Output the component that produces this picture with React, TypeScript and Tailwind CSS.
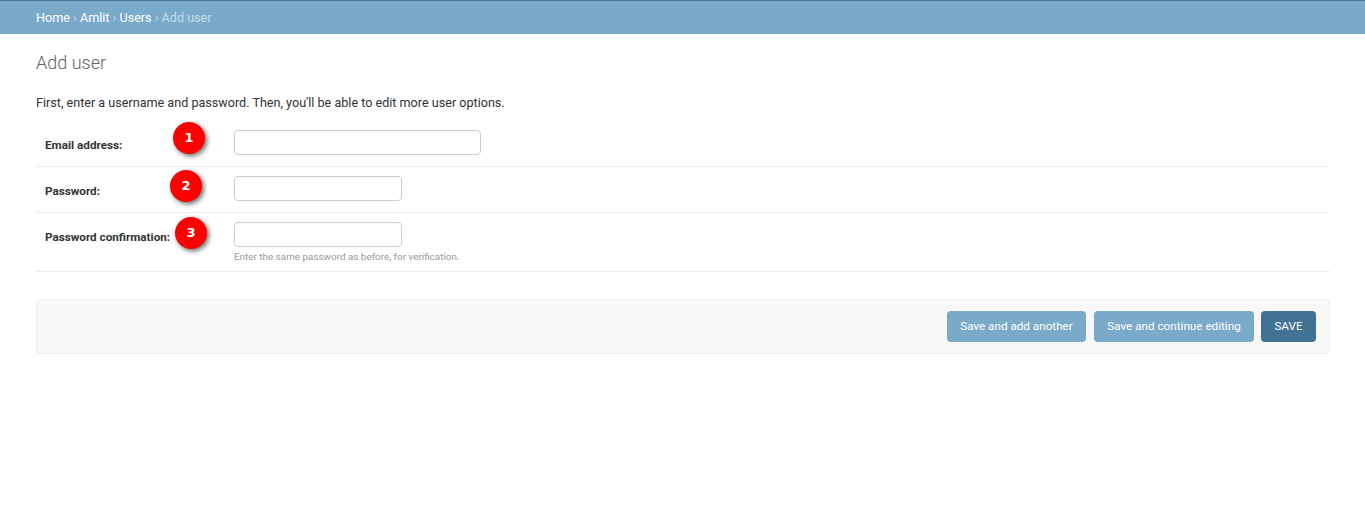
const rows = [
  { label: 'Email address:', width: 'w-[247px]', badge: '1', badgeClass: 'left-[137px] top-[1px]' },
  { label: 'Password:', width: 'w-[168px]', badge: '2', badgeClass: 'left-[134px] top-[3px]' },
  {
    label: 'Password confirmation:',
    width: 'w-[168px]',
    badge: '3',
    badgeClass: 'left-[139px] top-[4px]',
    help: 'Enter the same password as before, for verification.',
  },
]

function Badge({ value, className }: { value: string; className: string }) {
  return (
    <span
      className={`absolute flex h-8 w-8 items-center justify-center rounded-full bg-[#ff0000] font-['DejaVu_Sans',sans-serif] text-[13px] font-bold text-white shadow-[2px_2px_5px_rgba(0,0,0,0.6)] ${className}`}
    >
      {value}
    </span>
  )
}

export default function App() {
  return (
    <div className="min-h-[519px] bg-white font-['Roboto',sans-serif] text-[12.6px] text-[#333]">
      {/* Breadcrumbs */}
      <div className="h-[34px] border-t border-[#417193] bg-[#79aaca] pr-[35px] pl-9 pt-[8px] text-[12.6px] leading-[17px] text-[#c4dce8]">
        <a className="text-white">Home</a> › <a className="text-white">Amlit</a> ›{' '}
        <a className="text-white">Users</a> › Add user
      </div>

      <div className="pr-[35px] pl-9">
        <h1 className="mt-[18px] text-[18px] leading-[22px] font-light text-[#666]">Add user</h1>
        <p className="mt-[21px] text-[12.6px] leading-[16px] text-[#333]">
          First, enter a username and password. Then, you'll be able to edit more user options.
        </p>

        {/* Form rows */}
        <div className="mt-[10px]">
          {rows.map((row) => (
            <div key={row.label} className="relative flex border-b border-[#eee] px-[9px] pt-[9px] pb-[11px]">
              <label className="w-[189px] pt-[7px] text-[11.7px] leading-[16px] font-bold text-[#333]">
                {row.label}
              </label>
              <div>
                <input
                  type="text"
                  className={`block h-[25px] rounded border border-[#ccc] bg-white ${row.width}`}
                />
                {row.help && <p className="mt-[3px] -mb-[4px] text-[9.9px] leading-[14px] text-[#999]">{row.help}</p>}
              </div>
              <Badge value={row.badge} className={row.badgeClass} />
            </div>
          ))}
        </div>

        {/* Submit row */}
        <div className="mt-[27px] flex h-[55px] items-center justify-end gap-[8px] rounded border border-[#eee] bg-[#f8f8f8] pr-[13px]">
          <button className="h-[31px] w-[139px] rounded bg-[#79aaca] text-[11.7px] text-white">
            Save and add another
          </button>
          <button className="h-[31px] w-[160px] rounded bg-[#79aaca] text-[11.7px] text-white">
            Save and continue editing
          </button>
          <button className="-ml-[1px] h-[31px] w-[55px] rounded bg-[#417193] text-[11.7px] text-white">SAVE</button>
        </div>
      </div>
    </div>
  )
}
